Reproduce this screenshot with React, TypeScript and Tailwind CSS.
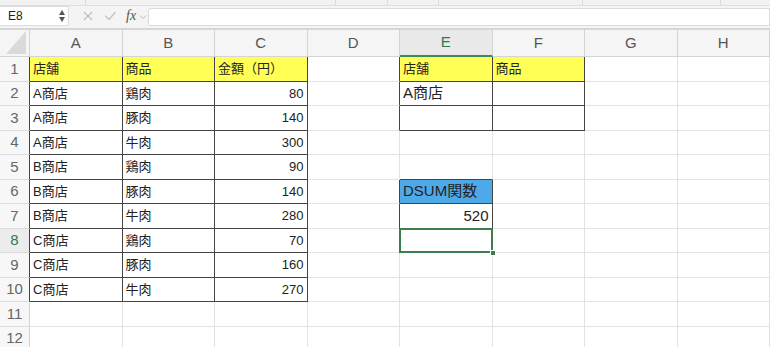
import React from 'react'

type Cell = { v?: string; align?: 'l' | 'r'; bg?: string }

const COLS = ['A', 'B', 'C', 'D', 'E', 'F', 'G', 'H']
const NROWS = 12

// cell contents, keyed "A1"
const data: Record<string, Cell> = {
  A1: { v: '店舗', bg: 'bg-[#ffff55]' },
  B1: { v: '商品', bg: 'bg-[#ffff55]' },
  C1: { v: '金額（円）', bg: 'bg-[#ffff55]' },
  E1: { v: '店舗', bg: 'bg-[#ffff55]' },
  F1: { v: '商品', bg: 'bg-[#ffff55]' },
  E2: { v: 'A商店' },
  E6: { v: 'DSUM関数', bg: 'bg-[#4ea9e8]' },
  E7: { v: '520', align: 'r' },
}

const rows = [
  ['A商店', '鶏肉', '80'],
  ['A商店', '豚肉', '140'],
  ['A商店', '牛肉', '300'],
  ['B商店', '鶏肉', '90'],
  ['B商店', '豚肉', '140'],
  ['B商店', '牛肉', '280'],
  ['C商店', '鶏肉', '70'],
  ['C商店', '豚肉', '160'],
  ['C商店', '牛肉', '270'],
]
rows.forEach((r, i) => {
  data[`A${i + 2}`] = { v: r[0] }
  data[`B${i + 2}`] = { v: r[1] }
  data[`C${i + 2}`] = { v: r[2], align: 'r' }
})

// ranges with thin black borders: [c1, r1, c2, r2]
const boxes = [
  [0, 1, 2, 10],
  [4, 1, 5, 3],
  [4, 6, 4, 7],
]
const inBox = (c: number, r: number) =>
  boxes.some(([c1, r1, c2, r2]) => c >= c1 && c <= c2 && r >= r1 && r <= r2)

const font = { fontFamily: '"Liberation Sans", "Noto Sans CJK JP", sans-serif' }

function FormulaBar() {
  return (
    <div className="h-[24px] bg-[#f4f4f4] border-b-2 border-[#d6d6d6] flex items-start">
      <div className="h-[20px] w-[69px] bg-white border-y border-r border-[#dcdcdc] flex items-center justify-between pl-[8px] pr-[3px]">
        <span className="text-[12px] text-[#222]">E8</span>
        <div className="flex flex-col gap-[2px] items-center">
          <span className="block w-0 h-0 border-x-[3.5px] border-x-transparent border-b-[5px] border-b-[#555]" />
          <span className="block w-0 h-0 border-x-[3.5px] border-x-transparent border-t-[5px] border-t-[#555]" />
        </div>
      </div>
      <div className="flex items-center h-[20px] w-[79px] pl-[13px]">
        <svg width="12" height="12" viewBox="0 0 12 12" className="mr-[10px]">
          <path d="M2 2 L10 10 M10 2 L2 10" stroke="#c2c2c2" strokeWidth="1.3" />
        </svg>
        <svg width="13" height="12" viewBox="0 0 13 12" className="mr-[9px]">
          <path d="M1.5 6 L5 9.5 L11.5 2" stroke="#c2c2c2" strokeWidth="1.3" fill="none" />
        </svg>
        <span className="italic text-[14px] text-[#555] leading-none" style={{ fontFamily: '"Liberation Serif", serif' }}>
          fx
        </span>
        <svg width="8" height="6" viewBox="0 0 8 6" className="ml-[3px] mt-[2px]">
          <path d="M1 1.5 L4 4.5 L7 1.5" stroke="#bbb" strokeWidth="1" fill="none" />
        </svg>
      </div>
      <div className="flex-1 h-[18px] mt-[2px] bg-white border border-[#dadada] rounded-l-[3px]" />
    </div>
  )
}

export default function App() {
  return (
    <div className="w-[770px] h-[347px] overflow-hidden bg-white" style={font}>
      {/* toolbar remnant */}
      <div className="h-[6px] bg-[#f2f2f2] border-b border-[#dedede] flex">
        <div className="w-[86px] border-r border-[#dcdcdc]" />
        <div className="w-[250px] border-r border-[#dcdcdc]" />
        <div className="w-[52px] border-r border-[#dcdcdc]" />
        <div className="w-[51px] border-r border-[#dcdcdc]" />
        <div className="w-[144px] border-r border-[#dcdcdc]" />
        <div className="w-[138px] border-r border-[#dcdcdc]" />
      </div>
      <FormulaBar />

      <div className="grid grid-cols-[30px_repeat(8,92.5px)] grid-rows-[27px_repeat(12,24.5px)]">
        {/* corner */}
        <div className="bg-[#f5f5f5] border-r border-b border-[#d4d4d4] relative">
          <span className="absolute right-[3px] bottom-[2px] w-0 h-0 border-l-[20px] border-l-transparent border-b-[23px] border-b-[#dadada]" />
        </div>
        {COLS.map((c, i) => (
          <div
            key={c}
            className={`flex items-center justify-center text-[15px] border-r ${
              i === 4
                ? 'bg-[#e9e9e9] text-[#2e7a4a] border-b-2 border-b-[#3d8a59] border-r-[#d4d4d4]'
                : 'bg-[#f5f5f5] text-[#555] border-b border-[#d4d4d4]'
            }`}
          >
            {c}
          </div>
        ))}

        {Array.from({ length: NROWS }, (_, ri) => {
          const r = ri + 1
          const rowHeadDark = inBox(0, r)
          return (
            <React.Fragment key={r}>
              <div
                className={`flex items-center justify-center text-[15px] border-b border-b-[#dcdcdc] border-r ${
                  r === 8 ? 'bg-[#ececec] text-[#2e7a4a]' : 'bg-[#f7f7f7] text-[#666]'
                } ${rowHeadDark ? 'border-r-[#444]' : 'border-r-[#d4d4d4]'}`}
              >
                {r}
              </div>
              {COLS.map((c, ci) => {
                const cell = data[`${c}${r}`] ?? {}
                const darkR = inBox(ci, r) || inBox(ci + 1, r)
                const darkB = inBox(ci, r) || inBox(ci, r + 1)
                const selected = c === 'E' && r === 8
                const big = c === 'E' && (r === 2 || r === 6 || r === 7)
                return (
                  <div
                    key={c}
                    className={`relative flex items-center text-[#222] border-r border-b px-[3px] whitespace-nowrap ${
                      big ? 'text-[15px]' : 'text-[13px]'
                    } ${cell.bg ?? ''} ${cell.align === 'r' ? 'justify-end' : ''} ${
                      darkR ? 'border-r-[#444]' : 'border-r-[#e2e2e2]'
                    } ${darkB ? 'border-b-[#444]' : 'border-b-[#e2e2e2]'} ${selected ? 'z-10' : ''}`}
                  >
                    {cell.v}
                    {selected && (
                      <>
                        <span className="absolute -left-px -top-px -right-px -bottom-px border-2 border-[#3b7d4f]" />
                        <span className="absolute -right-[4px] -bottom-[4px] w-[6px] h-[6px] bg-[#3b7d4f] border border-white" />
                      </>
                    )}
                  </div>
                )
              })}
            </React.Fragment>
          )
        })}
      </div>
    </div>
  )
}
